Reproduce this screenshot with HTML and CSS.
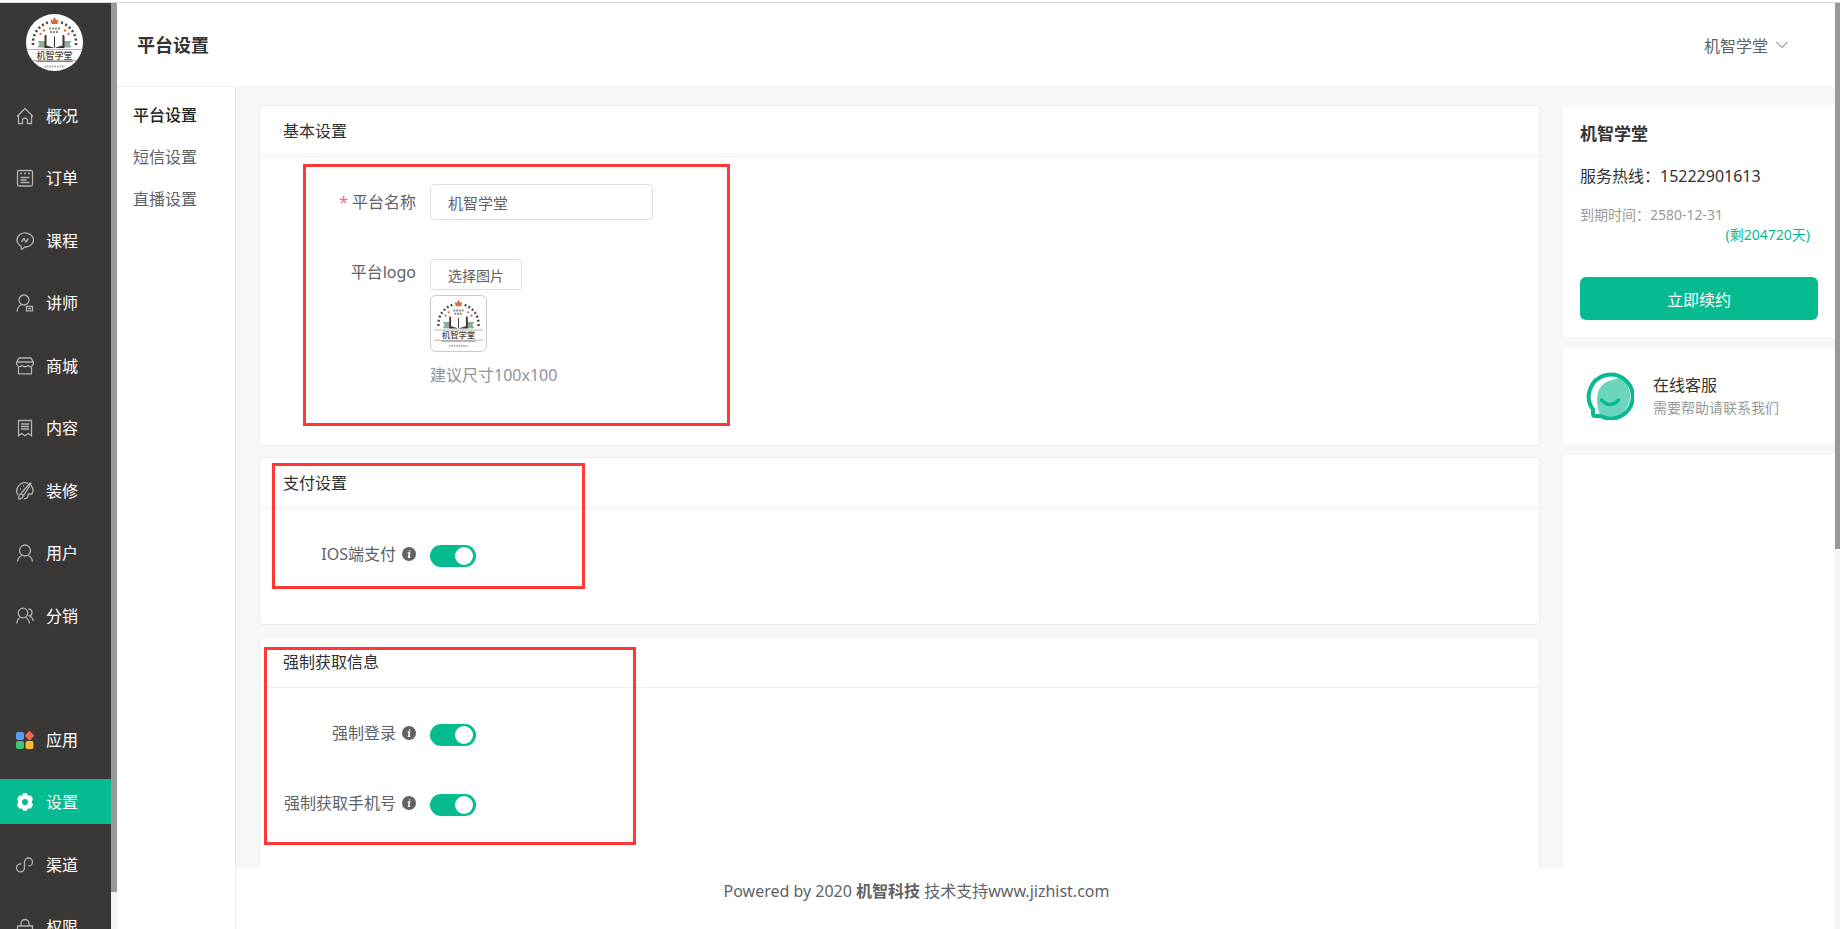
FILE: index.html
```html
<!DOCTYPE html>
<html lang="zh-CN">
<head>
<meta charset="utf-8">
<title>平台设置</title>
<link rel="stylesheet" href="styles.css">
</head>
<body>
<svg class="defs" aria-hidden="true">
  <symbol id="logo" viewBox="0 0 57 57">
    <rect width="57" height="57" fill="#fff"/>
    <path d="M24.500 5 L26.500 6.500 L28.500 3 L30.500 6.500 L32.500 5 L31.500 10 H25.500 Z" fill="#e2673a"/>
    <path d="M7 31 A21.500 21.500 0 0 1 22 8.500 M50 31 A21.500 21.500 0 0 0 35 8.500" fill="none" stroke="#4b4440" stroke-width="2.600" stroke-dasharray="2 2.500"/>
    <g fill="#e2673a"><circle cx="14.500" cy="20" r="1.200"/><circle cx="18" cy="16.500" r="1.200"/><circle cx="39" cy="16.500" r="1.200"/><circle cx="42.500" cy="20" r="1.200"/></g>
    <path d="M23 14.500 H34 M24 18 H33" stroke="#8d8783" stroke-width="2" stroke-dasharray="2 1"/>
    <path d="M11.500 27 H20 V33.500 H11.500 L13.500 30 Z M45.500 27 H37 V33.500 H45.500 L43.500 30 Z" fill="#8fac98"/>
    <path d="M18.500 21.500 L21 20.500 V31.500 L28.500 34 L36 31.500 V20.500 L38.500 21.500 V34 H18.500 Z" fill="#3c3431"/>
    <path d="M20.500 20 Q25.500 19.500 28.500 22.500 Q31.500 19.500 36.500 20 V31.500 Q31.500 31 28.500 33.500 Q25.500 31 20.500 31.500 Z" fill="#fff"/>
    <path d="M28.500 22.500 V33.500" stroke="#3c3431"/>
    <path d="M2 35.500 H55 M2 46.500 H55" stroke="#b4aeab"/>
    <path d="M10 47.500 H47" stroke="#8d8783"/>
    <text x="28.500" y="44.500" text-anchor="middle" class="logo-name">机智学堂</text>
    <path d="M18.500 52.500 H39" stroke="#a5a09d" stroke-width="2" stroke-dasharray="1.500 1"/>
  </symbol>
  <symbol id="info" viewBox="0 0 14 14">
    <circle cx="7" cy="7" r="7" fill="#606266"/>
    <path d="M7.700 3.400 L7.500 4.400 M5.700 6 H7.500 L6.600 10.200 H8.200" fill="none" stroke="#fff" stroke-width="1.500"/>
  </symbol>
</svg>

<div class="app">
  <aside class="sidebar">
    <a class="brand" href="#"><svg class="brand-logo" role="img" aria-label="机智学堂"><use href="#logo"/></svg></a>
    <nav class="nav">
      <a class="nav-item" href="#"><svg class="icon" viewBox="0 0 18 18"><path d="M1 9.500 L9 1.500 L17 9.500 M2.500 8.500 V16.500 H6.500 V12.500 Q9 9.500 11.500 12.500 V16.500 H15.500 V8.500"/></svg>概况</a>
      <a class="nav-item" href="#"><svg class="icon" viewBox="0 0 18 18"><rect x="1.500" y="1.500" width="15" height="15.500" rx="1.500"/><path d="M4 4.500 H6 M8 4.500 H10 M12 4.500 H14 M4.500 8.500 H13.500 M4.500 11 H10.500 M4.500 13.500 H13.500"/></svg>订单</a>
      <a class="nav-item" href="#"><svg class="icon" viewBox="0 0 18 18"><path d="M5 14 A8.200 7 0 1 1 9 15 L5.500 17.500 Z M5.500 10 L8 6.500 L10 10 L12.500 6.500"/></svg>课程</a>
      <a class="nav-item" href="#"><svg class="icon" viewBox="0 0 18 18"><circle cx="8" cy="6" r="5"/><path d="M1 17.500 Q1.500 12.500 5.500 10.500 M10.500 12.500 H16.500 V16.800 H10.500 Z M12 14.700 H15"/></svg>讲师</a>
      <a class="nav-item" href="#"><svg class="icon" viewBox="0 0 18 18"><path d="M3 1 H15 L17.300 5 V7.500 Q15 11 12 8.500 Q9 11 6 8.500 Q3 11 .7 7.500 V5 Z M1 5 H17 M2.500 10 V16.800 H15.500 V10"/></svg>商城</a>
      <a class="nav-item" href="#"><svg class="icon" viewBox="0 0 18 18"><path d="M2.500 1.500 H15.500 V16.800 L12.500 14.500 L9 16.800 L5.500 14.500 L2.500 16.800 Z M5 5 H13 M5 7.500 H13 M5 10 H13"/></svg>内容</a>
      <a class="nav-item" href="#"><svg class="icon" viewBox="0 0 18 18"><path d="M12 1.500 A8 8 0 0 0 2 13 M15 3.500 A7.500 7.500 0 0 1 16 12 H12.500 L11.500 15.500 Q10 17 8 16.500 M14 1 L5 11.500 L7.500 13.500 L15 1.500 Z M5 12 Q2 13 3 17 Q7 17 7 13.500 M4 7 H5 M7 4 H8"/></svg>装修</a>
      <a class="nav-item" href="#"><svg class="icon" viewBox="0 0 18 18"><circle cx="9" cy="6.500" r="5.500"/><path d="M1.500 17.500 Q2 13 6 11.500 M12 11.500 Q16 13 16.500 17.500"/></svg>用户</a>
      <a class="nav-item" href="#"><svg class="icon" viewBox="0 0 18 18"><circle cx="7" cy="6" r="4.800"/><path d="M.8 16.500 Q1 12 4.500 10.500 M9.500 10.500 Q13 12 13.500 16.500 M12.500 2 Q16.500 2.500 16 6 Q15.500 8.500 13.500 9 Q17 10.500 17.300 14"/></svg>分销</a>
    </nav>
    <nav class="nav nav-more">
      <a class="nav-item" href="#"><svg class="icon icon-color" viewBox="0 0 18 18"><rect y="1" width="8" height="8" rx="2" fill="#559df5"/><path d="M13.500 .7 L17.400 4.700 L13.500 8.700 L9.600 4.700 Z" fill="#fa6656" stroke="#fa6656" stroke-linejoin="round"/><rect y="10" width="8" height="8" rx="2" fill="#3fc675"/><rect x="9.500" y="10" width="8" height="8" rx="2" fill="#fbba2f"/></svg>应用</a>
      <a class="nav-item active" href="#" aria-current="page"><svg class="icon icon-color" viewBox="0 0 18 18"><path fill="#fff" stroke="#fff" stroke-linejoin="round" fill-rule="evenodd" d="M7.500 1 H10.500 L11.700 3.500 L14.500 3.200 L16.300 6 L15 9 L16.300 12 L14.500 14.800 L11.700 14.500 L10.500 17 H7.500 L6.300 14.500 L3.500 14.800 L1.700 12 L3 9 L1.700 6 L3.500 3.200 L6.300 3.500 Z M9 5.300 A3.700 3.700 0 1 0 9 12.700 A3.700 3.700 0 1 0 9 5.300 Z"/></svg>设置</a>
      <a class="nav-item" href="#"><svg class="icon" viewBox="0 0 18 18"><path d="M5.500 8 A4 4 0 1 0 8.500 12 V6 A4 4 0 1 1 12.500 10"/></svg>渠道</a>
      <a class="nav-item" href="#"><svg class="icon" viewBox="0 0 18 18"><path d="M5 8 V5.500 A4 4 0 0 1 13 5.500 V8 M1.500 8 H16.500 V18 H1.500 Z M9 11.500 V14.500"/></svg>权限</a>
    </nav>
  </aside>
  <div class="scrollbar scrollbar-side"><div class="thumb"></div></div>

  <div class="page">
    <header class="topbar">
      <h1>平台设置</h1>
      <button class="account" type="button">机智学堂<svg class="chevron" viewBox="0 0 12 8"><path d="M.5 1 L6 6.500 L11.500 1"/></svg></button>
    </header>
    <div class="body">
      <nav class="subnav">
        <a class="current" href="#" aria-current="page">平台设置</a>
        <a href="#">短信设置</a>
        <a href="#">直播设置</a>
      </nav>
      <div class="center">
        <main class="content">
          <section class="card">
            <h2>基本设置</h2>
            <form class="form">
              <div class="row">
                <label class="label" for="name"><span class="required">*</span>平台名称</label>
                <input class="text" id="name" type="text" value="机智学堂">
              </div>
              <div class="row">
                <label class="label" for="pick">平台logo</label>
                <div class="upload">
                  <button class="pick" id="pick" type="button">选择图片</button>
                  <svg class="preview" role="img" aria-label="logo"><use href="#logo"/></svg>
                  <p class="hint">建议尺寸100x100</p>
                </div>
              </div>
            </form>
            <div class="mark mark-basic"></div>
          </section>
          <section class="card">
            <h2>支付设置</h2>
            <form class="form">
              <div class="row">
                <label class="label" for="ios">IOS端支付<svg class="info"><use href="#info"/></svg></label>
                <input class="switch" id="ios" type="checkbox" role="switch" checked>
              </div>
            </form>
            <div class="mark mark-pay"></div>
          </section>
          <section class="card">
            <h2>强制获取信息</h2>
            <form class="form">
              <div class="row">
                <label class="label" for="login">强制登录<svg class="info"><use href="#info"/></svg></label>
                <input class="switch" id="login" type="checkbox" role="switch" checked>
              </div>
              <div class="row">
                <label class="label" for="phone">强制获取手机号<svg class="info"><use href="#info"/></svg></label>
                <input class="switch" id="phone" type="checkbox" role="switch" checked>
              </div>
            </form>
            <div class="mark mark-force"></div>
          </section>
        </main>
        <footer class="footer">Powered by 2020 <b>机智科技</b> 技术支持www.jizhist.com</footer>
      </div>
      <aside class="aside">
        <section class="plan">
          <h2>机智学堂</h2>
          <p class="hotline">服务热线：15222901613</p>
          <p class="expiry">到期时间：2580-12-31</p>
          <p class="remain">(剩204720天)</p>
          <button class="renew" type="button">立即续约</button>
        </section>
        <section class="service">
          <svg class="service-icon" viewBox="0 0 48 48">
            <path d="M24 6 Q31 5 36 7 A22 22 0 0 1 24 46 L14.500 44 Q11 35 11 28 Q11 8 34 6.500 Z" fill="#6bd6bd"/>
            <path d="M14.500 44 H9 Q7 44 7 42 V37.500 A22 22 0 1 1 14.500 44 Z" fill="none" stroke="#06bb90" stroke-width="4"/>
            <path d="M15.500 28 Q24 37 32.500 28" fill="none" stroke="#06bb90" stroke-width="3.500" stroke-linecap="round"/>
          </svg>
          <div>
            <h3>在线客服</h3>
            <p>需要帮助请联系我们</p>
          </div>
        </section>
        <section class="blank"></section>
      </aside>
    </div>
  </div>
  <div class="scrollbar scrollbar-page"><div class="thumb"></div></div>
</div>
</body>
</html>
```
FILE: styles.css
```css
:root {
  --green: #06bb90;
  --red: #ff3838;
  --text: #303133;
  --regular: #606266;
  --muted: #999;
  --line: #ebeef5;
}

* {
  box-sizing: border-box;
}

body {
  margin: 0;
  font: 16px/24px "Noto Sans", "Noto Sans CJK SC", sans-serif;
  color: var(--regular);
  background: #fff;
}

h1, h2, h3, p {
  margin: 0;
  font-size: 16px;
  font-weight: 400;
}

a {
  color: inherit;
  text-decoration: none;
}

button, input {
  margin: 0;
  font-family: inherit;
  color: inherit;
}

.defs {
  display: none;
}

.logo-name {
  font-size: 9px;
  font-weight: 500;
  fill: #4b4440;
}

.app {
  display: flex;
  height: 100vh;
  padding-top: 2px;
  overflow: hidden;
}

.app > * {
  border-top: 1px solid #d9d9dc;
}

/* Sidebar */
.sidebar {
  flex: none;
  width: 111px;
  overflow: hidden;
  background: #3a3836;
}

.brand {
  display: block;
  padding: 11px 0 22px 26px;
}

.brand-logo {
  display: block;
  width: 57px;
  height: 57px;
  border-radius: 50%;
}

.nav-item {
  display: flex;
  align-items: center;
  gap: 12px;
  height: 45px;
  margin-bottom: 17px;
  padding-left: 16px;
  color: #fff;
}

.nav-item:nth-child(even) {
  margin-bottom: 18px;
}

.nav-more {
  margin-top: 79px;
}

.active {
  background: var(--green);
}

.icon {
  width: 18px;
  height: 18px;
  fill: none;
  stroke: #b2b1b0;
  stroke-width: 1.3;
}

.icon-color {
  stroke: none;
}

.scrollbar {
  flex: none;
  background: #f4f4f4;
}

.scrollbar-side {
  width: 6px;
}

.scrollbar-page {
  width: 5px;
}

.thumb {
  background: #999;
}

.scrollbar-side .thumb {
  height: 96%;
}

.scrollbar-page .thumb {
  height: 59%;
}

/* Page frame */
.page {
  flex: 1;
  display: flex;
  flex-direction: column;
  min-width: 0;
}

.topbar {
  flex: none;
  display: flex;
  align-items: center;
  justify-content: space-between;
  height: 83px;
  padding: 0 47px 0 20px;
}

.topbar h1 {
  font-size: 18px;
  font-weight: 700;
  color: #333;
}

.account {
  display: flex;
  align-items: center;
  gap: 8px;
  padding: 0;
  border: 0;
  background: none;
  font-size: 16px;
}

.chevron {
  width: 12px;
  height: 8px;
  fill: none;
  stroke: var(--regular);
}

.body {
  flex: 1;
  display: flex;
  min-height: 0;
  background: #f7f7f7;
}

.subnav {
  flex: none;
  display: flex;
  flex-direction: column;
  gap: 18px;
  width: 119px;
  padding: 16px;
  border-top: 1px solid #ebebeb;
  border-right: 1px solid #ebebeb;
  background: #fff;
}

.subnav .current {
  font-weight: 500;
  color: #222;
}

.center {
  flex: 1;
  display: flex;
  flex-direction: column;
  min-width: 0;
}

.content {
  flex: 1;
  display: flex;
  flex-direction: column;
  gap: 11px;
  min-height: 0;
  padding: 19px 23px 0;
  overflow: hidden;
}

.footer {
  flex: none;
  padding: 11px 0 26px 34px;
  text-align: center;
  background: #fff;
}

/* Cards */
.card {
  position: relative;
  flex: none;
  border: 1px solid var(--line);
  border-radius: 4px;
  background: #fff;
}

.card h2 {
  padding: 13px 23px;
  border-bottom: 1px solid var(--line);
  color: var(--text);
}

.form {
  display: flex;
  flex-direction: column;
  gap: 34px;
  padding: 27px 20px 52px;
}

.row {
  display: flex;
  align-items: flex-start;
}

.label {
  display: flex;
  align-items: center;
  justify-content: flex-end;
  flex: none;
  width: 150px;
  height: 36px;
  padding-right: 14px;
}

.required {
  margin-right: 4px;
  color: #f56c6c;
}

.info {
  width: 14px;
  height: 14px;
  margin-left: 6px;
}

.text {
  width: 223px;
  height: 36px;
  padding: 0 17px;
  border: 1px solid #dcdfe6;
  border-radius: 4px;
  background: #fff;
  font-size: 15px;
}

.upload {
  display: flex;
  flex-direction: column;
  align-items: flex-start;
  padding-top: 5px;
}

.pick {
  height: 31px;
  padding: 0 17px;
  border: 1px solid #dcdfe6;
  border-radius: 3px;
  background: #fff;
  font-size: 14px;
}

.preview {
  width: 57px;
  height: 57px;
  margin: 5px 0;
  padding: 1px;
  border: 1px solid #c0ccda;
  border-radius: 6px;
}

.hint {
  line-height: 36px;
  color: #909399;
}

.switch {
  appearance: none;
  display: flex;
  justify-content: flex-end;
  width: 46px;
  height: 22px;
  margin-top: 9px;
  padding: 2px 3px;
  border-radius: 11px;
  background: var(--green);
}

.switch::before {
  content: "";
  width: 18px;
  height: 18px;
  border-radius: 50%;
  background: #fff;
}

/* Callout frames */
.mark {
  position: absolute;
  border: 3px solid var(--red);
  pointer-events: none;
}

.mark-basic {
  left: 43px;
  top: 58px;
  width: 427px;
  height: 262px;
}

.mark-pay {
  left: 12px;
  top: 5px;
  width: 313px;
  height: 126px;
}

.mark-force {
  left: 4px;
  top: 10px;
  width: 372px;
  height: 198px;
}

/* Right column */
.aside {
  flex: none;
  display: flex;
  flex-direction: column;
  gap: 11px;
  width: 272px;
  padding-top: 19px;
}

.plan, .service, .blank {
  background: #fff;
}

.plan {
  display: flex;
  flex-direction: column;
  padding: 17px;
}

.plan h2 {
  font-size: 17px;
  font-weight: 700;
  color: #333;
}

.hotline {
  margin-top: 18px;
  color: #333;
}

.expiry, .remain {
  font-size: 14px;
  line-height: 20px;
}

.expiry {
  margin-top: 17px;
  color: var(--muted);
}

.remain {
  padding-right: 8px;
  text-align: right;
  color: var(--green);
}

.renew {
  height: 43px;
  margin-top: 32px;
  border: 0;
  border-radius: 6px;
  background: var(--green);
  font-size: 16px;
  color: #fff;
}

.service {
  display: flex;
  align-items: center;
  gap: 19px;
  padding: 24px 23px;
}

.service-icon {
  width: 48px;
  height: 48px;
}

.service h3 {
  color: #333;
}

.service p {
  font-size: 14px;
  line-height: 22px;
  color: var(--muted);
}

.blank {
  flex: 1;
}
```
